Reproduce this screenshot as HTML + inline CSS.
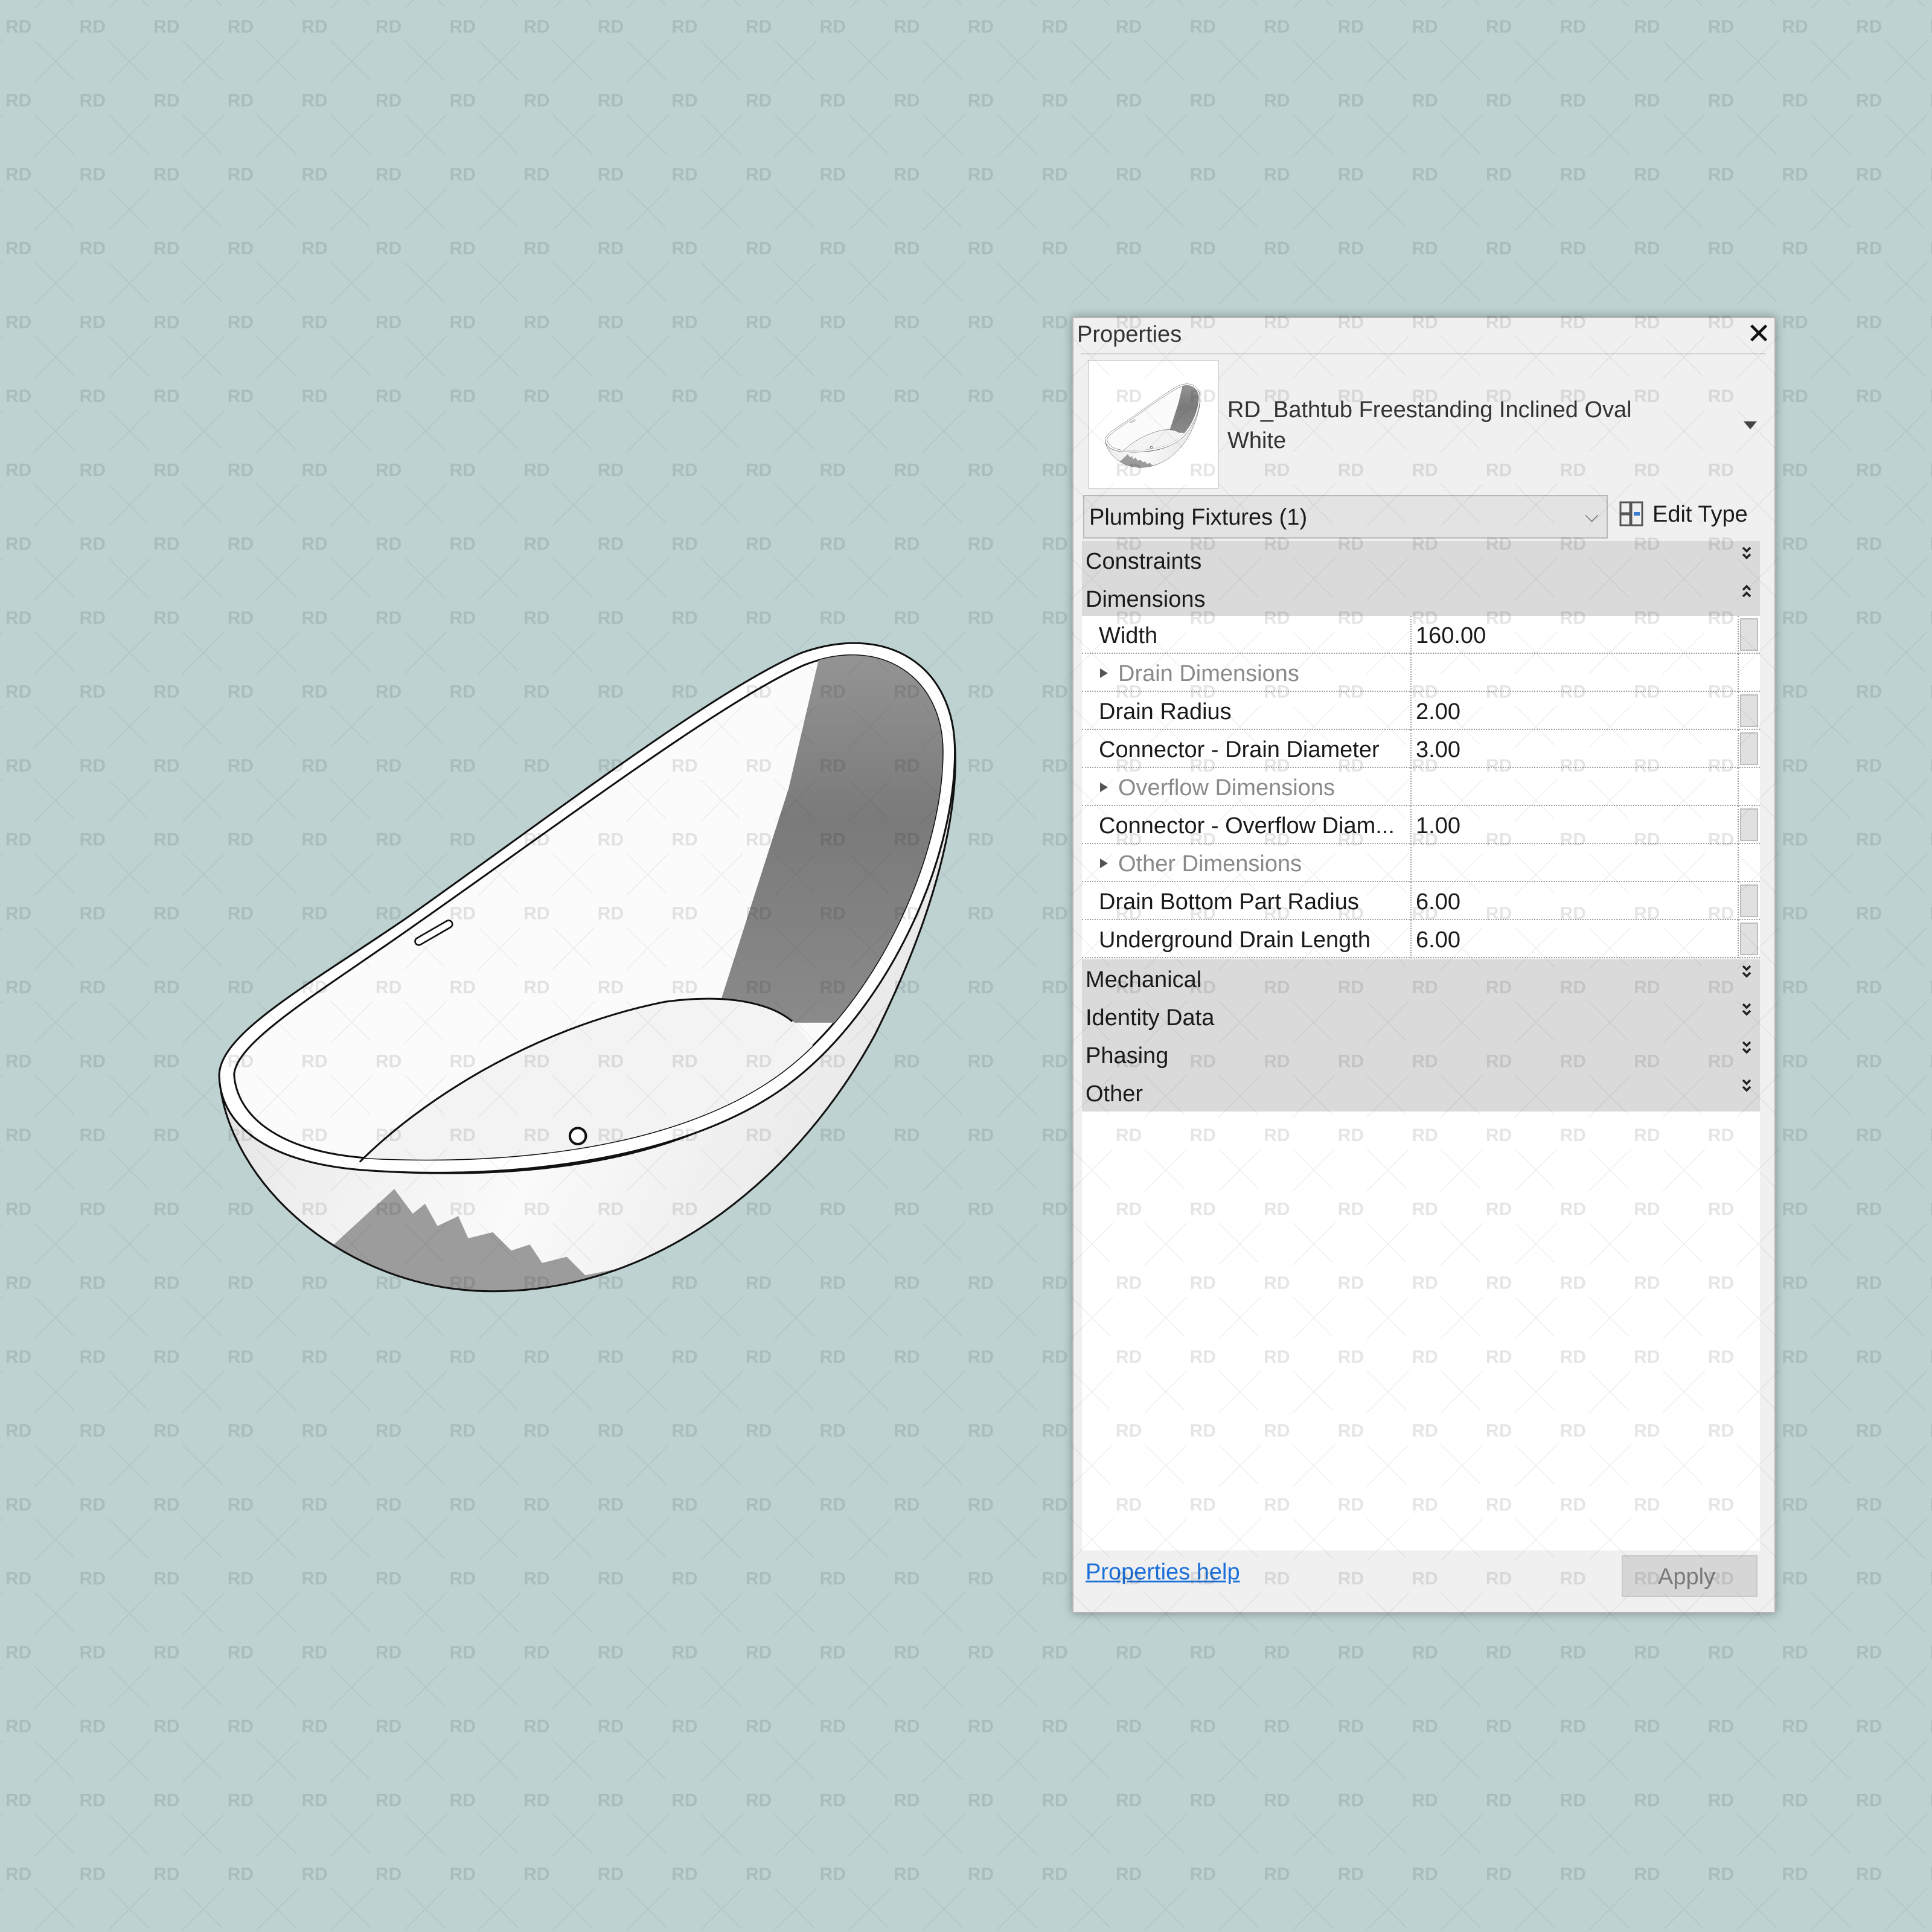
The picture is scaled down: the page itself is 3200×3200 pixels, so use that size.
<!DOCTYPE html>
<html><head><meta charset="utf-8">
<style>
*{margin:0;padding:0;box-sizing:border-box}
body{width:3200px;height:3200px;background:#bdd2d1;position:relative;overflow:hidden;font-family:"Liberation Sans",sans-serif;}
.a{position:absolute}
.t{font-size:37px;color:#1a1a1a;white-space:nowrap;line-height:1}
.hdr{position:absolute;left:1792px;width:1123px;height:63px;background:#dadada}
.hdr span{position:absolute;left:6px;top:13px;font-size:38px;color:#1a1a1a}
.hdr svg{position:absolute;right:12px;top:8px}
.row{position:absolute;left:1792px;width:1123px;height:63px;background:#fff;border-bottom:2px dotted #a0a0a0}
.row .l{position:absolute;left:28px;top:12px;font-size:38px;color:#1a1a1a;white-space:nowrap}
.row .g{position:absolute;left:60px;top:12px;font-size:38px;color:#8a8a8a;white-space:nowrap}
.row .tri{position:absolute;left:30px;top:24px;width:0;height:0;border-left:13px solid #555;border-top:8px solid transparent;border-bottom:8px solid transparent}
.row .v{position:absolute;left:553px;top:12px;font-size:38px;color:#1a1a1a}
.row .sep{position:absolute;left:544px;top:0;height:63px;border-left:2px dotted #a0a0a0}
.row .sc{position:absolute;left:1086px;top:0;width:37px;height:63px;border-left:2px dotted #a0a0a0}
.row .btn{position:absolute;left:1090px;top:4px;width:30px;height:54px;background:#e0e0e0;border:2px solid #bdbdbd}
</style></head><body>

<svg width="0" height="0" style="position:absolute"><defs>
<symbol id="dn" viewBox="0 0 20 26"><path d="M4,3 L10,9 L16,3 M4,14 L10,20 L16,14" fill="none" stroke="#222" stroke-width="3.5"/></symbol>
<symbol id="up" viewBox="0 0 20 26"><path d="M4,10 L10,4 L16,10 M4,21 L10,15 L16,21" fill="none" stroke="#222" stroke-width="3.5"/></symbol>
</defs></svg>

<svg class="a" style="left:0;top:0" width="3200" height="3200" viewBox="0 0 1568 1568">
<defs>
<linearGradient id="body" x1="0" y1="0" x2="1" y2="0.3">
<stop offset="0" stop-color="#d0d0d0"/><stop offset="0.3" stop-color="#eeeeee"/><stop offset="0.6" stop-color="#fafafa"/><stop offset="1" stop-color="#e8e8e8"/></linearGradient>
<linearGradient id="dark" x1="0" y1="0" x2="0" y2="1">
<stop offset="0" stop-color="#9a9a9a"/><stop offset="0.5" stop-color="#7a7a7a"/><stop offset="1" stop-color="#8a8a8a"/></linearGradient>
<clipPath id="inner"><path d="M190,872 C192,845 260,805 335,752 C455,668 585,570 652,540 C715,515 765,550 765,610 C765,695 712,812 635,870 C555,930 420,946 300,940 C225,935 192,905 190,872Z"/></clipPath>
<clipPath id="bodyc"><path d="M178,875 C185,960 280,1048 400,1048 C540,1048 650,950 710,840 C760,740 778,660 775,605 C770,700 700,830 620,890 C540,945 420,958 300,950 C220,945 180,915 178,875Z"/></clipPath>
<symbol id="tub" viewBox="160 500 640 570">
<path d="M178,875 C185,960 280,1048 400,1048 C540,1048 650,950 710,840 C760,740 778,660 775,605 C770,700 700,830 620,890 C540,945 420,958 300,950 C220,945 180,915 178,875Z" fill="url(#body)"/>
<g clip-path="url(#bodyc)">
<path d="M320,965 L335,985 L345,977 L355,995 L372,987 L380,1005 L400,1000 L415,1015 L430,1010 L440,1025 L460,1020 L475,1035 L500,1030 L520,1042 L560,1038 L600,1050 L300,1060 L260,1020Z" fill="#9c9c9c"/>
</g>
<path d="M178,875 C185,960 280,1048 400,1048 C540,1048 650,950 710,840 C760,740 778,660 775,605 C770,700 700,830 620,890 C540,945 420,958 300,950 C220,945 180,915 178,875Z" fill="none" stroke="#111" stroke-width="1.5"/>
<path d="M178,875 C175,840 250,800 330,745 C450,660 580,560 650,530 C720,505 775,540 775,610 C775,700 720,820 640,880 C560,940 420,958 300,950 C220,945 180,915 178,875Z" fill="#fff" stroke="#111" stroke-width="1.5"/>
<path d="M190,872 C192,845 260,805 335,752 C455,668 585,570 652,540 C715,515 765,550 765,610 C765,695 712,812 635,870 C555,930 420,946 300,940 C225,935 192,905 190,872Z" fill="#fbfbfb" stroke="#111" stroke-width="1.5"/>
<g clip-path="url(#inner)">
<polygon points="668,520 640,640 585,812 645,830 800,830 800,500" fill="url(#dark)"/>
<path d="M292,943 C340,895 430,835 540,813 C600,805 630,818 645,830 L700,900 L300,960Z" fill="#f3f3f3"/>
</g>
<path d="M292,943 C340,895 430,835 540,813 C600,805 630,818 643,829" fill="none" stroke="#111" stroke-width="1.5"/>
<rect x="335" y="754" width="34" height="6" rx="3" transform="rotate(-30 352 757)" fill="#fff" stroke="#111" stroke-width="1.3"/>
<circle cx="469" cy="922" r="6.5" fill="#fff" stroke="#111" stroke-width="2"/>
</symbol>
</defs>
<use href="#tub" x="160" y="500" width="640" height="570"/>
</svg>

<!-- Panel -->
<div class="a" style="left:1776px;top:525px;width:1165px;height:2147px;background:#f0f0f0;border:2px solid #b5b5b5;box-shadow:0 0 14px rgba(0,0,0,0.35)"></div>
<div class="a t" style="left:1784px;top:535px;font-size:38px;color:#333">Properties</div>
<div class="a" style="left:2893px;top:530px;font-size:48px;color:#111;line-height:1">✕</div>
<div class="a" style="left:1790px;top:585px;width:1135px;height:2px;background:#d5d5d5"></div>
<div class="a" style="left:1802px;top:596px;width:217px;height:214px;background:#fff;border:2px solid #d8d8d8"></div>
<svg class="a" style="left:1820px;top:630px" width="180" height="150"><use href="#tub" x="0" y="0" width="180" height="150"/></svg>
<div class="a t" style="left:2033px;top:660px;font-size:38px;color:#333">RD_Bathtub Freestanding Inclined Oval</div>
<div class="a t" style="left:2033px;top:711px;font-size:38px;color:#333">White</div>
<div class="a" style="left:2888px;top:698px;border-top:13px solid #444;border-left:11px solid transparent;border-right:11px solid transparent"></div>
<div class="a" style="left:1794px;top:820px;width:869px;height:72px;background:#e3e3e3;border:2px solid #b8b8b8"></div>
<div class="a t" style="left:1804px;top:838px;font-size:38px">Plumbing Fixtures (1)</div>
<div class="a" style="left:2625px;top:838px;font-size:30px;color:#666">⌵</div>
<svg class="a" style="left:2682px;top:830px" width="42" height="44"><rect x="2" y="2" width="16" height="18" fill="none" stroke="#555" stroke-width="3"/><rect x="2" y="22" width="16" height="18" fill="none" stroke="#555" stroke-width="3"/><rect x="20" y="2" width="18" height="38" fill="none" stroke="#555" stroke-width="3"/><rect x="24" y="18" width="10" height="6" fill="#3b7bd0"/></svg>
<div class="a t" style="left:2737px;top:833px;font-size:38px">Edit Type</div>

<div class="hdr" style="top:896px"><span>Constraints</span><svg width="20" height="26"><use href="#dn"/></svg></div>
<div class="hdr" style="top:959px"><span>Dimensions</span><svg width="20" height="26"><use href="#up"/></svg></div>
<div class="row" style="top:1020px"><span class="l">Width</span><span class="sep"></span><span class="v">160.00</span><span class="sc"></span><span class="btn"></span></div>
<div class="row" style="top:1083px"><span class="tri"></span><span class="g">Drain Dimensions</span><span class="sep"></span><span class="sc"></span></div>
<div class="row" style="top:1146px"><span class="l">Drain Radius</span><span class="sep"></span><span class="v">2.00</span><span class="sc"></span><span class="btn"></span></div>
<div class="row" style="top:1209px"><span class="l">Connector - Drain Diameter</span><span class="sep"></span><span class="v">3.00</span><span class="sc"></span><span class="btn"></span></div>
<div class="row" style="top:1272px"><span class="tri"></span><span class="g">Overflow Dimensions</span><span class="sep"></span><span class="sc"></span></div>
<div class="row" style="top:1335px"><span class="l">Connector - Overflow Diam...</span><span class="sep"></span><span class="v">1.00</span><span class="sc"></span><span class="btn"></span></div>
<div class="row" style="top:1398px"><span class="tri"></span><span class="g">Other Dimensions</span><span class="sep"></span><span class="sc"></span></div>
<div class="row" style="top:1461px"><span class="l">Drain Bottom Part Radius</span><span class="sep"></span><span class="v">6.00</span><span class="sc"></span><span class="btn"></span></div>
<div class="row" style="top:1524px"><span class="l">Underground Drain Length</span><span class="sep"></span><span class="v">6.00</span><span class="sc"></span><span class="btn"></span></div>
<div class="hdr" style="top:1589px"><span>Mechanical</span><svg width="20" height="26"><use href="#dn"/></svg></div>
<div class="hdr" style="top:1652px"><span>Identity Data</span><svg width="20" height="26"><use href="#dn"/></svg></div>
<div class="hdr" style="top:1715px"><span>Phasing</span><svg width="20" height="26"><use href="#dn"/></svg></div>
<div class="hdr" style="top:1778px"><span>Other</span><svg width="20" height="26"><use href="#dn"/></svg></div>
<div class="a" style="left:1792px;top:1841px;width:1123px;height:727px;background:#fff"></div>
<div class="a t" style="left:1798px;top:2585px;font-size:38px;color:#1a6fd8;text-decoration:underline">Properties help</div>
<div class="a" style="left:2686px;top:2576px;width:225px;height:69px;background:#d6d6d6;border:2px solid #c8c8c8"></div>
<div class="a t" style="left:2746px;top:2593px;font-size:38px;color:#7a7a7a">Apply</div>

<!-- watermark overlay -->
<svg class="a" style="left:0;top:0;pointer-events:none" width="3200" height="3200">
<defs><pattern id="wm" x="0" y="0" width="122.6" height="122.4" patternUnits="userSpaceOnUse">
<text x="9" y="54" font-family="Liberation Sans, sans-serif" font-weight="bold" font-size="30" fill="rgba(0,0,0,0.10)">RD</text>
<path d="M57,67 L127,137 M127,67 L57,137 M-65.6,67 L4.4,137 M4.4,67 L-65.6,137 M57,-55.4 L127,14.6 M127,-55.4 L57,14.6" stroke="rgba(0,0,0,0.07)" stroke-width="1.3"/>
</pattern></defs>
<rect width="3200" height="3200" fill="url(#wm)"/>
</svg>
</body></html>
